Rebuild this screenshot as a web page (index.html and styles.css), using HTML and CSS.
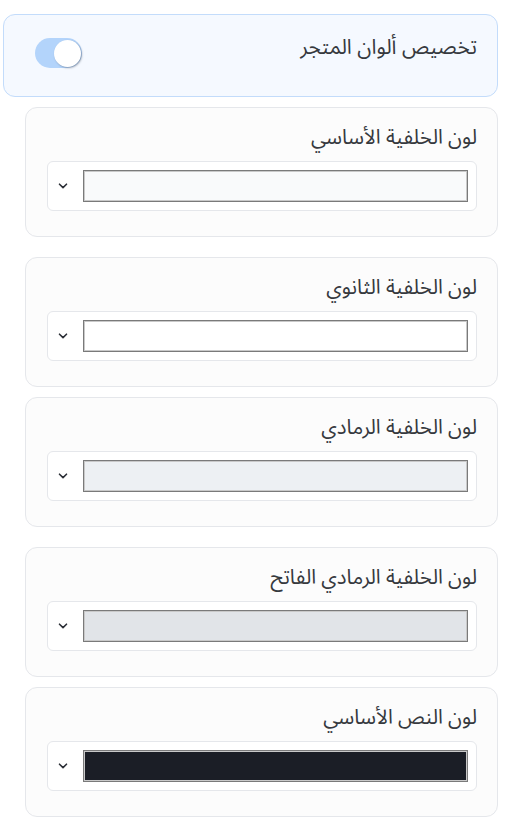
FILE: index.html
```html
<!DOCTYPE html>
<html lang="ar" dir="rtl">
<head>
<meta charset="utf-8">
<title>ألوان المتجر</title>
<link rel="stylesheet" href="styles.css">
</head>
<body>
<main class="page">
  <section class="toggle-card">
    <h2 class="toggle-title">تخصيص ألوان المتجر</h2>
    <span class="switch" role="switch" aria-checked="true"><span class="knob"></span></span>
  </section>

  <div class="fields">
    <section class="field-card">
      <label class="field-label">لون الخلفية الأساسي</label>
      <div class="picker">
        <span class="swatch swatch-primary"></span>
        <svg class="chev" width="10" height="6" viewBox="0 0 10 6"><path d="M1.5 1.2 5 4.6 8.5 1.2" fill="none" stroke="#2b2f36" stroke-width="1.6" stroke-linecap="round" stroke-linejoin="round"/></svg>
      </div>
    </section>

    <section class="field-card gap-lg">
      <label class="field-label">لون الخلفية الثانوي</label>
      <div class="picker">
        <span class="swatch swatch-secondary"></span>
        <svg class="chev" width="10" height="6" viewBox="0 0 10 6"><path d="M1.5 1.2 5 4.6 8.5 1.2" fill="none" stroke="#2b2f36" stroke-width="1.6" stroke-linecap="round" stroke-linejoin="round"/></svg>
      </div>
    </section>

    <section class="field-card">
      <label class="field-label">لون الخلفية الرمادي</label>
      <div class="picker">
        <span class="swatch swatch-gray"></span>
        <svg class="chev" width="10" height="6" viewBox="0 0 10 6"><path d="M1.5 1.2 5 4.6 8.5 1.2" fill="none" stroke="#2b2f36" stroke-width="1.6" stroke-linecap="round" stroke-linejoin="round"/></svg>
      </div>
    </section>

    <section class="field-card gap-lg">
      <label class="field-label">لون الخلفية الرمادي الفاتح</label>
      <div class="picker">
        <span class="swatch swatch-light"></span>
        <svg class="chev" width="10" height="6" viewBox="0 0 10 6"><path d="M1.5 1.2 5 4.6 8.5 1.2" fill="none" stroke="#2b2f36" stroke-width="1.6" stroke-linecap="round" stroke-linejoin="round"/></svg>
      </div>
    </section>

    <section class="field-card">
      <label class="field-label">لون النص الأساسي</label>
      <div class="picker">
        <span class="swatch swatch-text"></span>
        <svg class="chev" width="10" height="6" viewBox="0 0 10 6"><path d="M1.5 1.2 5 4.6 8.5 1.2" fill="none" stroke="#2b2f36" stroke-width="1.6" stroke-linecap="round" stroke-linejoin="round"/></svg>
      </div>
    </section>
  </div>
</main>
</body>
</html>
```
FILE: styles.css
```css
* { box-sizing: border-box; }

html, body {
  margin: 0;
  background: #ffffff;
}

body {
  font-family: "Noto Sans Arabic", "Noto Sans", "DejaVu Sans", sans-serif;
  color: #36393e;
}

.page {
  padding: 14px 13px 0 3px;
}

.toggle-card {
  display: flex;
  justify-content: space-between;
  align-items: flex-start;
  height: 83px;
  padding: 19px 20px 0 31px;
  background: #f5f9ff;
  border: 1px solid #c3dcfb;
  border-radius: 12px;
}

.toggle-title {
  margin: 0;
  font-size: 20.8px;
  font-weight: 400;
  line-height: 26px;
  color: #36393e;
}

.switch {
  position: relative;
  display: block;
  width: 47px;
  height: 30px;
  margin-top: 4px;
  border-radius: 15px;
  background: #b3d4fb;
}

.knob {
  position: absolute;
  top: 2px;
  left: 19px;
  width: 27px;
  height: 27px;
  border-radius: 50%;
  background: #ffffff;
  box-shadow: 1px 1px 2px rgba(60, 70, 90, 0.45);
}

.fields {
  display: flex;
  flex-direction: column;
  gap: 10px;
  padding: 10px 0 0 22px;
}

.field-card {
  display: flex;
  flex-direction: column;
  height: 130px;
  padding: 16px 20px 0 21px;
  background: #fcfcfc;
  border: 1px solid #e5e7eb;
  border-radius: 12px;
}

.gap-lg { margin-top: 10px; }

.field-label {
  display: block;
  font-size: 20.4px;
  line-height: 28px;
  color: #36393e;
}

.picker {
  display: flex;
  align-items: center;
  justify-content: space-between;
  height: 50px;
  margin-top: 9px;
  padding: 0 8px 0 9px;
  background: #ffffff;
  border: 1px solid #e5e7eb;
  border-radius: 6px;
}

.swatch {
  display: block;
  width: 385px;
  height: 32px;
  border: 1px solid #7a7a7a;
  box-shadow: inset 0 0 0 1px #c9c9c9;
}

.chev {
  display: block;
  margin-left: 1px;
}

.swatch-primary { background: #f9fafb; }
.swatch-secondary { background: #ffffff; }
.swatch-gray { background: #edf0f3; }
.swatch-light { background: #e1e4e8; }
.swatch-text { background: #1b1e26; }
```
